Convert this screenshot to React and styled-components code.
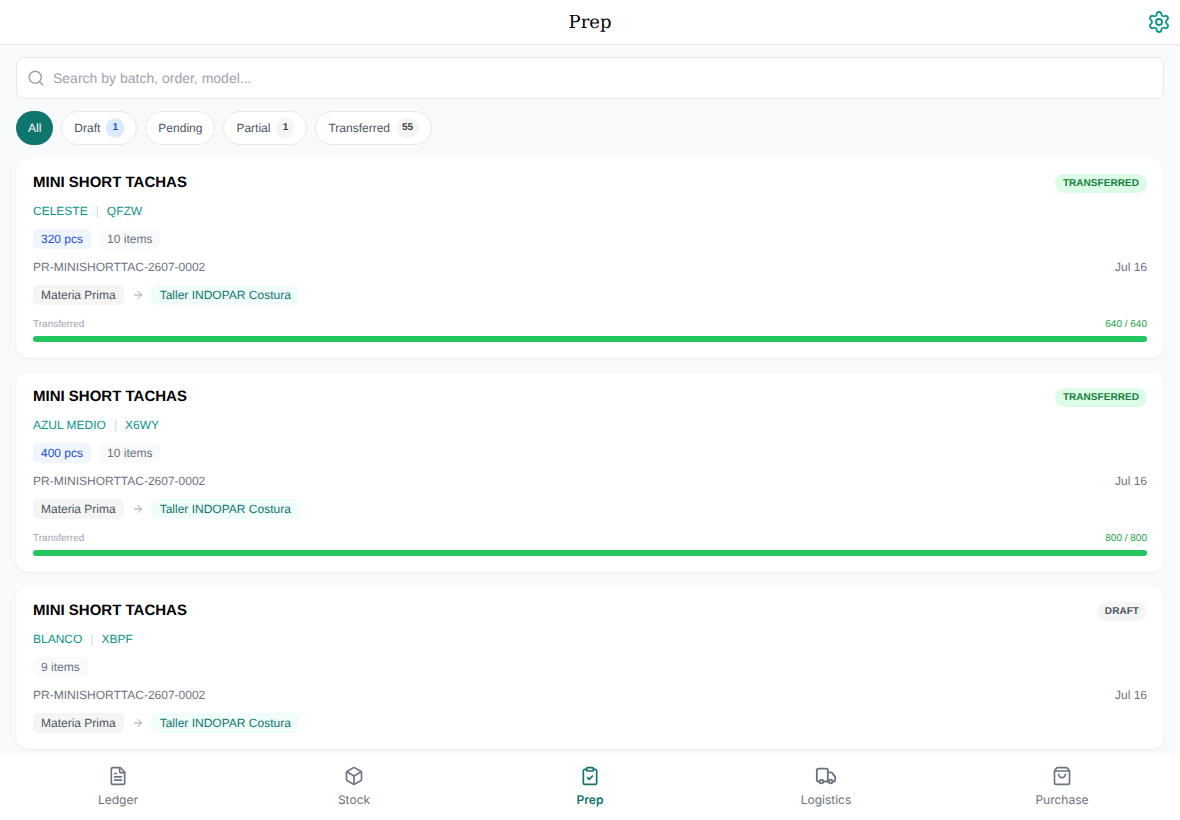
import React from "react";
import styled, { createGlobalStyle } from "styled-components";
import { Settings, Search, FileText, Box, ClipboardCheck, Truck, ShoppingBag, ArrowRight } from "lucide-react";

const Global = createGlobalStyle`
  html, body { margin: 0; padding: 0; height: 100%; overflow: hidden; }
  body { font-family: "Liberation Sans", Arial, sans-serif; background: #f9fafb; text-rendering: geometricPrecision; }
  * { box-sizing: border-box; }
`;
const Page = styled.div`
  width: 1180px; height: 820px; display: flex; flex-direction: column; background: #f9fafb; overflow: hidden;
`;
const Header = styled.header`
  height: 45px; flex: none; background: #fff; border-bottom: 1px solid #e5e7eb;
  display: flex; align-items: center; justify-content: center; position: relative;
`;
const Title = styled.h1`
  margin: 0; padding-top: 2px; font: 400 18px/28px "DejaVu Serif", serif; color: #000;
`;
const Gear = styled.span`
  position: absolute; right: 9px; top: 10px; display: flex; color: #0d9488;
`;
const Main = styled.main`
  flex: 1; min-height: 0; overflow: hidden; padding: 12px 16px 0; display: flex; flex-direction: column;
`;
const SearchBox = styled.div`
  height: 42px; flex: none; background: #fff; border: 1px solid #e5e7eb; border-radius: 8px;
  display: flex; align-items: center; padding-left: 10px; gap: 8px; color: #9ca3af;
`;
const SearchText = styled.span`font-size: 14px; color: #9ca3af;`;
const Chips = styled.div`display: flex; gap: 8px; margin-top: 12px; flex: none;`;
const Chip = styled.div`
  height: 34px; border-radius: 17px; display: flex; align-items: center; gap: 6px; font-size: 12px;
  padding: 0 12px;
  background: ${p => p.$active ? "#0f766e" : "#fff"};
  color: ${p => p.$active ? "#fff" : "#4b5563"};
  border: ${p => p.$active ? "0" : "1px solid #e5e7eb"};
`;
const Count = styled.span`
  min-width: 18px; height: 20px; padding: 0 6px; border-radius: 10px; font-size: 10px; font-weight: 700;
  display: flex; align-items: center; justify-content: center; margin-top: -1px;
  background: ${p => p.$blue ? "#dbeafe" : "#f5f5f4"};
  color: ${p => p.$blue ? "#1d4ed8" : "#374151"};
`;
const List = styled.div`display: flex; flex-direction: column; gap: 14px; margin-top: 13px;`;
const Card = styled.article`
  background: #fff; border: 1px solid #fdfdfe; border-radius: 12px; padding: 15px 16px;
  box-shadow: 0 1px 3px rgba(0,0,0,.05);
  display: flex; flex-direction: column;
`;
const TopRow = styled.div`display: flex; justify-content: space-between; align-items: flex-start; height: 18px;`;
const Name = styled.div`font-size: 15px; line-height: 18px; font-weight: 700; color: #000;`;
const Badge = styled.span`
  height: 19px; padding: 0 8px; border-radius: 10px; font-size: 10px; font-weight: 700; display: flex; align-items: center;
  letter-spacing: .05px;
  background: ${p => p.$draft ? "#f5f5f4" : "#dcfce7"};
  color: ${p => p.$draft ? "#4b5563" : "#15803d"};
`;
const ColorRow = styled.div`
  display: flex; align-items: center; gap: 8px; margin-top: 11px; height: 16px; font-size: 12px; color: #0d9488;
`;
const Sep = styled.span`color: #d1d5db; font-size: 12px;`;
const Tags = styled.div`display: flex; gap: 8px; margin-top: 10px;`;
const Tag = styled.span`
  height: 20px; padding: 0 8px; border-radius: 5px; font-size: 12px; display: flex; align-items: center;
  background: ${p => p.$blue ? "#eff6ff" : p.$teal ? "#f0fdfa" : p.$dark ? "#f5f5f4" : "#f9fafb"};
  color: ${p => p.$blue ? "#1d4ed8" : p.$teal ? "#0f766e" : p.$dark ? "#4b5563" : "#6b7280"};
`;
const RefRow = styled.div`
  display: flex; justify-content: space-between; align-items: center; margin-top: 10px; height: 16px; font-size: 12px; color: #6b7280;
`;
const Route = styled.div`display: flex; align-items: center; gap: 8px; margin-top: 10px; color: #9ca3af;`;
const Progress = styled.div`margin-top: 13px;`;
const ProgressLabels = styled.div`
  display: flex; justify-content: space-between; align-items: center; height: 13px; font-size: 10px; color: #9ca3af;
`;
const Done = styled.span`color: #16a34a;`;
const Track = styled.div`height: 6px; border-radius: 3px; background: #22c55e; margin-top: 5px;`;
const Nav = styled.nav`
  height: 67px; flex: none; background: #fff; display: grid; grid-template-columns: repeat(5, 1fr);
`;
const NavItem = styled.div`
  display: flex; flex-direction: column; align-items: center; padding-top: 13px; gap: 6px;
  font: ${p => p.$active ? 600 : 400} 12px/16px Inter, sans-serif;
  color: ${p => p.$active ? "#0f766e" : "#6b7280"};
`;
const NavGlyph = styled.span`
  width: 20px; height: 20px; display: flex; align-items: center; justify-content: center;
  svg { flex: none; }
`;

const cards = [
  { color: "CELESTE", code: "QFZW", pcs: "320 pcs", items: "10 items", status: "TRANSFERRED", prog: "640 / 640" },
  { color: "AZUL MEDIO", code: "X6WY", pcs: "400 pcs", items: "10 items", status: "TRANSFERRED", prog: "800 / 800" },
  { color: "BLANCO", code: "XBPF", items: "9 items", status: "DRAFT" },
];
const navs = [
  { label: "Ledger", Icon: FileText, size: 20 },
  { label: "Stock", Icon: Box, size: 20 },
  { label: "Prep", Icon: ClipboardCheck, size: 20, active: true },
  { label: "Logistics", Icon: Truck, size: 22 },
  { label: "Purchase", Icon: ShoppingBag, size: 20 },
];

export default function App() {
  return (
    <Page>
      <Global />
      <Header>
        <Title>Prep</Title>
        <Gear><Settings size={24} strokeWidth={1.8} /></Gear>
      </Header>
      <Main>
        <SearchBox>
          <Search size={18} />
          <SearchText>Search by batch, order, model...</SearchText>
        </SearchBox>
        <Chips>
          <Chip $active>All</Chip>
          <Chip>Draft<Count $blue>1</Count></Chip>
          <Chip>Pending</Chip>
          <Chip>Partial<Count>1</Count></Chip>
          <Chip>Transferred<Count>55</Count></Chip>
        </Chips>
        <List>
          {cards.map(c => (
            <Card key={c.color}>
              <TopRow>
                <Name>MINI SHORT TACHAS</Name>
                <Badge $draft={c.status === "DRAFT"}>{c.status}</Badge>
              </TopRow>
              <ColorRow>{c.color}<Sep>|</Sep>{c.code}</ColorRow>
              <Tags>
                {c.pcs && <Tag $blue>{c.pcs}</Tag>}
                <Tag>{c.items}</Tag>
              </Tags>
              <RefRow><span>PR-MINISHORTTAC-2607-0002</span><span>Jul 16</span></RefRow>
              <Route>
                <Tag $dark>Materia Prima</Tag>
                <ArrowRight size={12} />
                <Tag $teal>Taller INDOPAR Costura</Tag>
              </Route>
              {c.prog && (
                <Progress>
                  <ProgressLabels><span>Transferred</span><Done>{c.prog}</Done></ProgressLabels>
                  <Track />
                </Progress>
              )}
            </Card>
          ))}
        </List>
      </Main>
      <Nav>
        {navs.map(({ label, Icon, size, active }) => (
          <NavItem key={label} $active={active}>
            <NavGlyph><Icon size={size} strokeWidth={2} /></NavGlyph>
            {label}
          </NavItem>
        ))}
      </Nav>
    </Page>
  );
}
